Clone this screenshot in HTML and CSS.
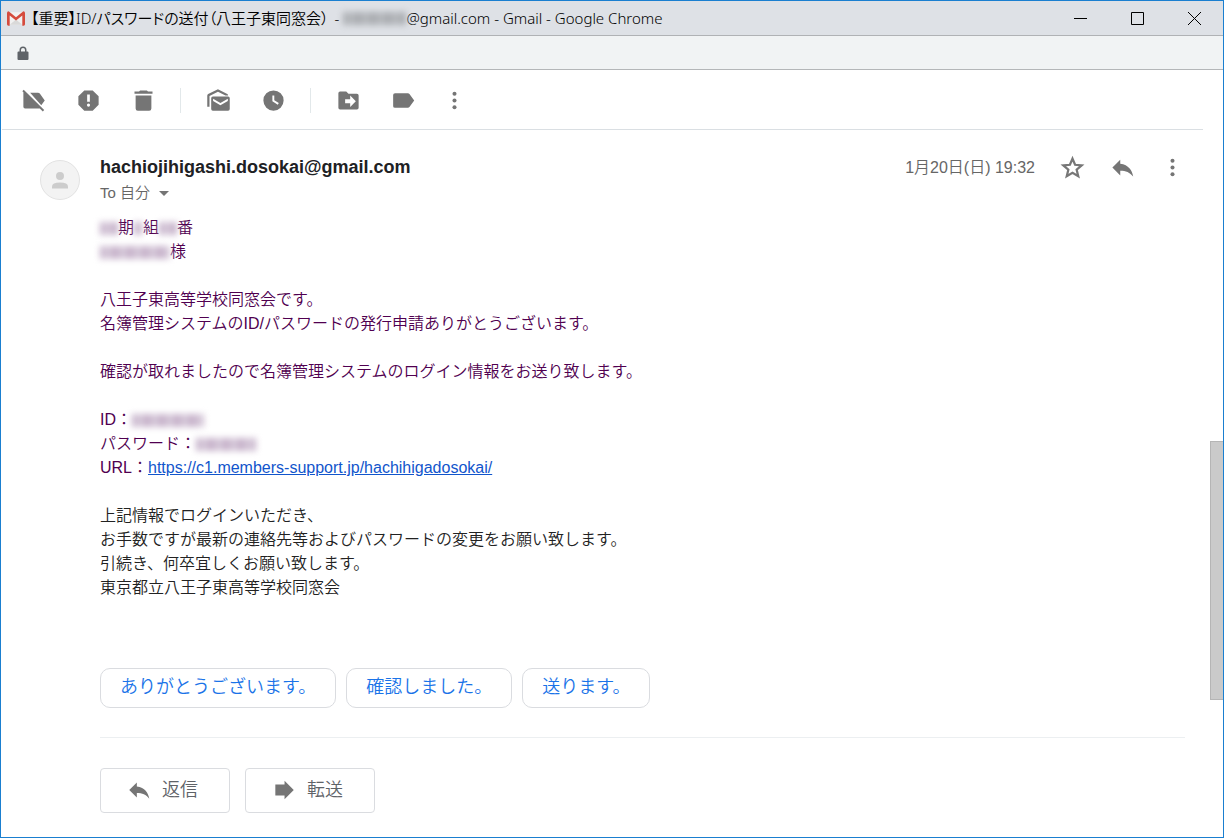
FILE: index.html
```html
<!DOCTYPE html>
<html lang="ja">
<head>
<meta charset="utf-8">
<title>【重要】ID/パスワードの送付（八王子東同窓会） - Gmail</title>
<link rel="stylesheet" href="styles.css">
</head>
<body>
<div class="window">
  <header class="titlebar">
    <svg class="gmail-logo" viewBox="0 0 20 16"><path fill="#f1f1f1" d="M1 1h18v14H1z"/><path fill="#d9d9d9" d="M3 15l7-6 7 6z"/><path fill="#d54b3d" d="M0 1.8Q0 0 1.8 0L10 6.6 18.200 0Q20 0 20 1.800V14.500Q20 16 18.500 16H17V4.800L10 10.200 3 4.800V16H1.500Q0 16 0 14.500z"/></svg>
    <h1 class="title"><span class="subject">【重要】ID/パスワードの送付（八王子東同窓会）</span><span class="dash">-</span><span class="redacted redacted-user"></span><span>@gmail.com - Gmail - Google Chrome</span></h1>
    <div class="window-controls">
      <button type="button" aria-label="最小化"><svg viewBox="0 0 13 13"><path d="M0 6.500h13"/></svg></button>
      <button type="button" aria-label="最大化"><svg viewBox="0 0 13 13"><path d="M.5.5h12v12H.5z"/></svg></button>
      <button type="button" aria-label="閉じる"><svg viewBox="0 0 13 13"><path d="M0 0l13 13M13 0L0 13"/></svg></button>
    </div>
  </header>
  <div class="addressbar">
    <svg class="lock" viewBox="0 0 12 15"><path fill="#5f6368" d="M1.500 5.500H2.500V4a3.500 3.500 0 0 1 7 0v1.500h1q1 0 1 1v6.500q0 1-1 1h-9q-1 0-1-1V6.500q0-1 1-1zM4 5.500h4V4a2 2 0 0 0-4 0z"/></svg>
  </div>
  <div class="viewport">
    <main class="mail">
      <nav class="toolbar">
        <button type="button" aria-label="ラベルを削除"><svg class="icon" viewBox="0 0 24 24"><path d="M3.300 2.500L21.500 20.500 20.300 21.700l-2.700-2.700H4.500Q3 19 3 17.500V4.700L2.100 3.700zM9 5H16q1 0 1.600.8L22 12l-3.100 4.300z"/></svg></button>
        <button type="button" aria-label="迷惑メールを報告"><svg class="icon" viewBox="0 0 24 24"><path d="M15.730 3H8.270L3 8.270v7.460L8.270 21h7.460L21 15.730V8.270zM12 17.500a1.400 1.400 0 1 1 0-2.800 1.400 1.400 0 0 1 0 2.800zM13.200 13.200h-2.400V6.700h2.400z"/></svg></button>
        <button type="button" aria-label="削除"><svg class="icon" viewBox="0 0 24 24"><path d="M5 19q0 2 2 2h10q2 0 2-2V7.500H5zM20 4h-4l-1-1H9L8 4H4v2h16z"/></svg></button>
        <span class="divider"></span>
        <button type="button" aria-label="未読にする"><svg class="icon" viewBox="0 0 24 24"><path d="M4 17.500H2V7.800q0-1 .8-1.500L11.500 2l8.300 4.300q.7.500.7 1.200h-2.300L11.500 4.200 4 8z"/><path d="M7 8.500h13.500Q22 8.500 22 10v9.500q0 1.500-1.500 1.500H7q-1.500 0-1.500-1.500V10Q5.500 8.500 7 8.500zM7.200 10.500v2l6.500 3.800 6.600-3.800v-2l-6.600 3.800z"/></svg></button>
        <button type="button" aria-label="スヌーズ"><svg class="icon" viewBox="0 0 24 24"><path d="M12 3a9 9 0 1 0 0 18 9 9 0 0 0 0-18zm3.800 12.800L11 12.700V7.500h1.700v4.300l4 2.500z"/></svg></button>
        <span class="divider"></span>
        <button type="button" aria-label="移動"><svg class="icon" viewBox="0 0 24 24"><path d="M19.500 6H12l-2-2H4.500Q3 4 3 5.500v13Q3 20 4.500 20h15q1.500 0 1.500-1.500v-11Q21 6 19.500 6zM13.500 17.800v-3.300H9v-3.700h4.500V7.600l5 5.100z"/></svg></button>
        <button type="button" aria-label="ラベル"><svg class="icon" viewBox="0 0 24 24"><path d="M17.300 6.200q-.5-.7-1.400-.7H4.500Q2.800 5.500 2.800 7v10q0 1.500 1.700 1.500h11.400q.9 0 1.400-.7L21.500 12z"/></svg></button>
        <button type="button" class="more" aria-label="その他"><svg class="icon" viewBox="0 0 24 24"><circle cx="12" cy="6" r="1.800"/><circle cx="12" cy="12" r="1.800"/><circle cx="12" cy="18" r="1.800"/></svg></button>
      </nav>
      <article class="message">
        <svg class="avatar" viewBox="0 0 40 40"><circle cx="20" cy="20" r="19.500" fill="#f3f3f3" stroke="#e2e2e2"/><circle cx="20" cy="16" r="4" fill="#ccc"/><path fill="#ccc" d="M12 28.500v-2q0-4 8-4t8 4v2z"/></svg>
        <div class="content">
          <div class="message-head">
            <div class="sender">
              <h2 class="from">hachiojihigashi.dosokai@gmail.com</h2>
              <button type="button" class="recipient">To 自分<svg class="caret" viewBox="0 0 10 5"><path d="M0 0h10L5 5z"/></svg></button>
            </div>
            <time class="date" datetime="2019-01-20T19:32">1月20日(日) 19:32</time>
            <div class="actions">
              <button type="button" aria-label="スター"><svg class="icon" viewBox="0 0 24 24"><path fill="none" stroke="#777" stroke-width="2" d="M12 4.200l2.300 5.400 5.900.5-4.500 3.900 1.400 5.700-5.100-3-5.100 3L8.300 14l-4.500-3.900 5.900-.5z"/></svg></button>
              <button type="button" aria-label="返信"><svg class="icon" viewBox="0 0 24 24"><path d="M10 8.700V5l-7 7 7 7v-4.200c5 0 8.500 1.500 11.500 5.200-1-5.500-4-10.300-11.500-11.300z"/></svg></button>
              <button type="button" aria-label="その他"><svg class="icon" viewBox="0 0 24 24"><circle cx="12" cy="6" r="1.800"/><circle cx="12" cy="12" r="1.800"/><circle cx="12" cy="18" r="1.800"/></svg></button>
            </div>
          </div>
          <div class="body">
            <p class="quoted"><span class="redacted redacted-s"></span>期<span class="redacted redacted-xs"></span>組<span class="redacted redacted-s"></span>番<br><span class="redacted redacted-name"></span>様</p>
            <p class="quoted">八王子東高等学校同窓会です。<br>名簿管理システムのID/パスワードの発行申請ありがとうございます。</p>
            <p class="quoted">確認が取れましたので名簿管理システムのログイン情報をお送り致します。</p>
            <p class="quoted">ID：<span class="redacted redacted-id"></span><br>パスワード：<span class="redacted redacted-pw"></span><br>URL：<a href="https://c1.members-support.jp/hachihigadosokai/">https://c1.members-support.jp/hachihigadosokai/</a></p>
            <p>上記情報でログインいただき、<br>お手数ですが最新の連絡先等およびパスワードの変更をお願い致します。<br>引続き、何卒宜しくお願い致します。<br>東京都立八王子東高等学校同窓会</p>
          </div>
          <div class="suggestions">
            <button type="button">ありがとうございます。</button>
            <button type="button">確認しました。</button>
            <button type="button">送ります。</button>
          </div>
          <div class="replies">
            <button type="button"><svg class="reply-icon" viewBox="0 0 24 24"><path d="M10 8.700V5l-7 7 7 7v-4.200c5 0 8.500 1.500 11.500 5.200-1-5.500-4-10.300-11.500-11.300z"/></svg>返信</button>
            <button type="button"><svg class="reply-icon" viewBox="0 0 24 24"><path d="M4 7h8.500V3.500L21 12l-8.500 8.500V17H4z"/></svg>転送</button>
          </div>
        </div>
      </article>
    </main>
    <div class="scroll-track"><div class="scroll-thumb"></div></div>
  </div>
</div>
</body>
</html>
```
FILE: styles.css
```css
* {
  box-sizing: border-box;
}

body {
  margin: 0;
  background: #fff;
  color: #222;
  font: 350 16px/24px "Liberation Sans", "Noto Sans CJK JP", sans-serif;
}

h1, h2, p {
  margin: 0;
}

button {
  padding: 0;
  border: 0;
  background: none;
  color: inherit;
  font: inherit;
}

.window {
  display: flex;
  flex-direction: column;
  min-height: 100vh;
  border: 1px solid #1a7fd0;
}

.titlebar {
  display: flex;
  align-items: center;
  height: 35px;
  padding-left: 6px;
  background: #dee1e6;
  border-bottom: 1px solid #b0b2b5;
}

.gmail-logo {
  width: 18px;
  height: 15px;
  margin-right: 6px;
}

.title {
  display: flex;
  align-items: center;
  flex: 1;
  color: #000;
  font: 350 15px/24px "Noto Sans", "Noto Sans CJK JP", sans-serif;
  white-space: nowrap;
}

.subject {
  font-feature-settings: "palt";
}

.dash {
  margin: 0 4px 0 6px;
}

.window-controls {
  display: flex;
}

.window-controls button {
  display: grid;
  place-items: center;
  width: 57px;
  height: 34px;
}

.window-controls svg {
  width: 13px;
  height: 13px;
  fill: none;
  stroke: #000;
}

.addressbar {
  display: flex;
  align-items: center;
  height: 34px;
  padding: 2px 0 0 16px;
  background: #f1f3f4;
  border-bottom: 1px solid #b4b6b8;
}

.lock {
  width: 12px;
  height: 15px;
}

.viewport {
  display: flex;
  flex: 1;
}

.mail {
  flex: 1;
  min-width: 0;
}

.toolbar {
  display: flex;
  align-items: center;
  height: 60px;
  margin-left: 1px;
  padding: 2px 4px 0;
  border-bottom: 1px solid #dadfe3;
}

.toolbar button {
  display: grid;
  place-items: center;
  width: 55px;
  height: 55px;
}

.toolbar .more {
  width: 47px;
}

.icon {
  width: 27px;
  height: 27px;
  fill: #757575;
}

.divider {
  width: 1px;
  height: 25px;
  margin: 0 10px 0 9px;
  background: #e2e8ea;
}

.message {
  display: flex;
  gap: 20px;
  padding: 23px 6px 24px 39px;
}

.avatar {
  flex: none;
  width: 40px;
  height: 40px;
  margin-top: 7px;
}

.content {
  flex: 1;
  min-width: 0;
}

.message-head {
  display: flex;
  align-items: flex-start;
  height: 63px;
  color: #666;
}

.sender {
  flex: 1;
}

.from {
  color: #202124;
  font-size: 18px;
  font-weight: 700;
  line-height: 28px;
}

.recipient {
  display: flex;
  align-items: center;
  font-size: 15px;
  line-height: 24px;
}

.caret {
  width: 10px;
  height: 5px;
  margin-left: 9px;
  fill: #757575;
}

.date {
  margin-right: 12px;
  font-size: 16px;
  line-height: 30px;
}

.actions {
  display: flex;
}

.actions button {
  display: grid;
  place-items: center;
  width: 50px;
  height: 28px;
}

.body p {
  margin-bottom: 24px;
}

.body .quoted {
  color: #500050;
}

.body a {
  color: #15c;
}

.redacted {
  display: inline-block;
  height: 13px;
  background: repeating-linear-gradient(90deg, #c3adc7, #d9cddc 8px, #c3adc7 15px);
  filter: blur(3px);
  vertical-align: middle;
}

.redacted-user {
  width: 63px;
  background: repeating-linear-gradient(90deg, #a6a9ad, #b9bcc0 8px, #a6a9ad 15px);
}

.redacted-xs {
  width: 9px;
}

.redacted-s {
  width: 18px;
}

.redacted-name {
  width: 70px;
}

.redacted-id {
  width: 72px;
}

.redacted-pw {
  width: 60px;
}

.suggestions {
  display: flex;
  gap: 10px;
  margin-right: 12px;
  padding: 44px 0 29px;
  border-bottom: 1px solid #eceff1;
}

.suggestions button {
  height: 40px;
  padding: 0 19px 3px;
  border: 1px solid #dadce0;
  border-radius: 10px;
  color: #1a73e8;
  font-size: 18px;
}

.replies {
  display: flex;
  gap: 15px;
  padding-top: 30px;
}

.replies button {
  display: flex;
  align-items: center;
  justify-content: center;
  gap: 10px;
  width: 130px;
  height: 45px;
  padding: 0 6px 2px 0;
  border: 1px solid #dadce0;
  border-radius: 4px;
  color: #5f6368;
  font-size: 18px;
}

.reply-icon {
  width: 26px;
  height: 26px;
  fill: #757575;
}

.scroll-track {
  display: grid;
  grid-template-rows: 371fr 259fr 137fr;
  justify-content: end;
  width: 20px;
}

.scroll-thumb {
  grid-row: 2;
  width: 13px;
  background: #cacaca;
  border: 1px solid #b5b5b5;
  border-right: 0;
}
```
